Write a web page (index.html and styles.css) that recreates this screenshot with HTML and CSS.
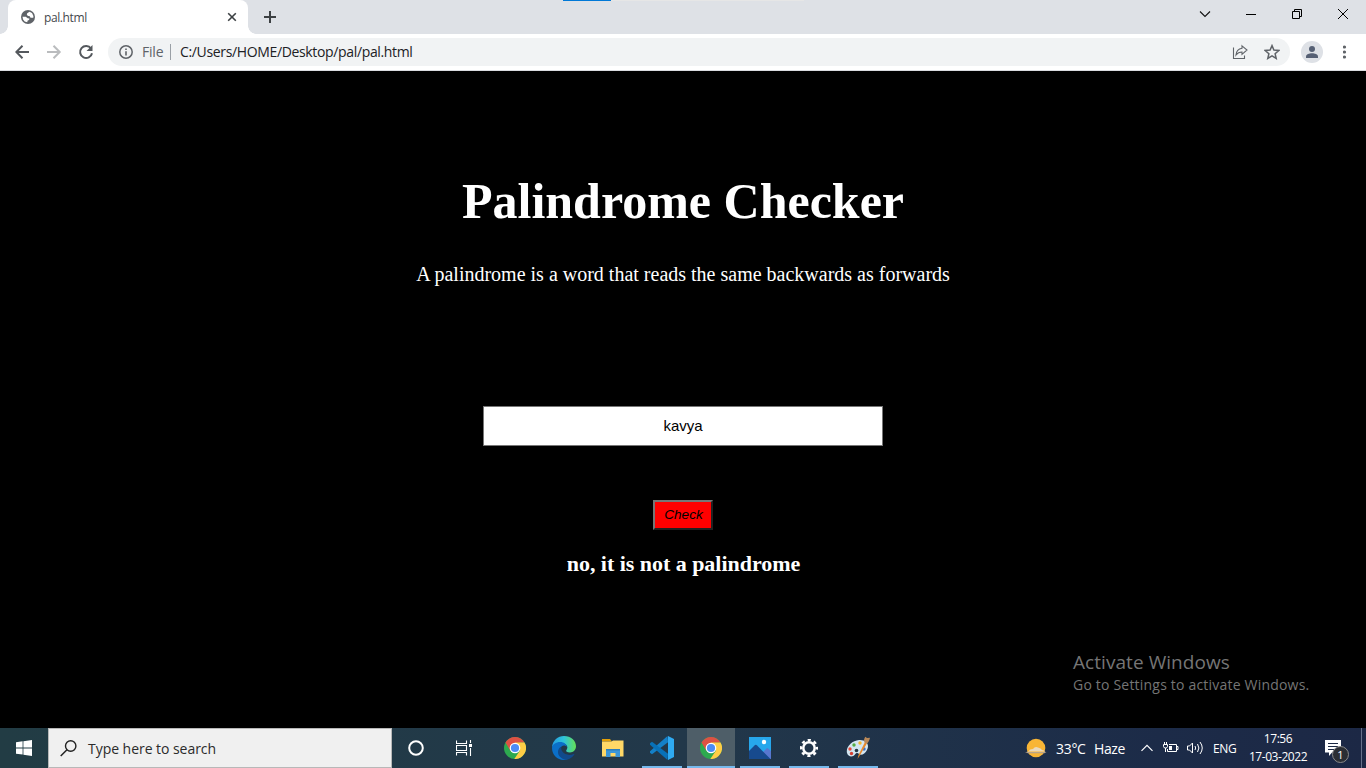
FILE: index.html
```
<!DOCTYPE html>
<html lang="en">
<head>
<meta charset="utf-8">
<title>pal.html</title>
<link rel="stylesheet" href="styles.css">
</head>
<body>
<svg class="defs" width="0" height="0" aria-hidden="true">
  <symbol id="chrome" viewBox="0 0 22 22">
    <circle cx="11" cy="11" r="11" fill="#2da94f"/>
    <path d="M11 11 1.5 5.5A11 11 0 0 1 20.5 5.5L11 6z" fill="#dd5144"/>
    <path d="M11 5.5h9.5A11 11 0 0 1 10.3 22L16 13.5z" fill="#ffcd46"/>
    <path d="M1.5 5.5 6.5 14 11 6z" fill="#dd5144"/>
    <circle cx="11" cy="11" r="5.3" fill="#fff"/>
    <circle cx="11" cy="11" r="4.1" fill="#4c8bf5"/>
  </symbol>
</svg>

<header class="tabs">
  <div class="tab">
    <svg class="globe" width="14" height="14" viewBox="0 0 14 14"><circle cx="7" cy="7" r="7" fill="#5f6368"/><path d="M8.500 1.700 6.200 3.200 5.800 5l1.500 1.100 1.500.2.700 1.400h2.800L12.400 6 11 3zM1.500 6.800h3.300l1.900 1.400 1.700.4-.3 1.500-1.400.5-.5 1.700-2.500-.8-1.600-2z" fill="#fff"/></svg>
    <span class="tab-title">pal.html</span>
    <svg class="tab-close" width="10" height="10" viewBox="0 0 10 10"><path d="m1.2 1.2 7.6 7.6m0-7.6L1.2 8.8" stroke="#3c4043" stroke-width="1.6"/></svg>
  </div>
  <svg class="newtab" width="12" height="12" viewBox="0 0 12 12"><path d="M6 0v12M0 6h12" stroke="#3c4043" stroke-width="2"/></svg>
  <div class="progress"><div class="progress-value"></div></div>
  <div class="window-controls">
    <svg width="46" height="28" viewBox="0 0 46 28"><path d="m18 11.500 5 5 5-5" fill="none" stroke="#111" stroke-width="1.100"/></svg>
    <svg width="46" height="28" viewBox="0 0 46 28"><path d="M18 14.500h10" stroke="#000"/></svg>
    <svg width="46" height="28" viewBox="0 0 46 28"><path d="M18.500 11.500h7v7h-7zM20.500 11.500v-2h7v7h-2" fill="none" stroke="#000"/></svg>
    <svg width="46" height="28" viewBox="0 0 46 28"><path d="m18 9 10 10m0-10L18 19" stroke="#000"/></svg>
  </div>
</header>

<nav class="toolbar">
  <svg width="32" height="24" viewBox="0 0 32 24"><path d="M14 12H1.500m6-6.200L1.300 12l6.200 6.200" fill="none" stroke="#54585d" stroke-width="2"/></svg>
  <svg width="32" height="24" viewBox="0 0 32 24"><path d="M0 12h12.500m-6-6.200L12.700 12l-6.200 6.200" fill="none" stroke="#babcbe" stroke-width="2"/></svg>
  <svg class="reload" width="16" height="16" viewBox="0 0 16 16"><path d="M13 4.500A6 6 0 1 0 14 9.200" fill="none" stroke="#54585d" stroke-width="2"/><path d="M14.500 1v6h-6z" fill="#54585d"/></svg>
  <div class="address">
    <svg width="14" height="14" viewBox="0 0 14 14"><circle cx="7" cy="7" r="6.200" fill="none" stroke="#5f6368" stroke-width="1.500"/><path d="M7 6.200v4.300M7 3.400v1.600" stroke="#5f6368" stroke-width="1.600"/></svg>
    <span class="scheme">File</span>
    <span class="path">C:/Users/HOME/Desktop/pal/pal.html</span>
    <svg class="share" width="16" height="16" viewBox="0 0 16 16"><path d="M1.500 3.500v11h11v-3" fill="none" stroke="#5f6368" stroke-width="1.100"/><path d="M10 1.800 15 6l-5 4.300V8C7.300 8 5.700 8.700 4 11c.3-3.700 2.400-6.200 6-6.700z" fill="none" stroke="#5f6368" stroke-width="1.100"/></svg>
    <svg class="star" width="16" height="16" viewBox="0 0 16 16"><path d="m8 1.600 1.900 4.500 4.900.4-3.700 3.200 1.100 4.700L8 11.900l-4.200 2.500 1.100-4.700L1.200 6.500l4.900-.4z" fill="none" stroke="#5f6368" stroke-width="1.500"/></svg>
  </div>
  <svg class="profile" width="22" height="22" viewBox="0 0 22 22"><circle cx="11" cy="11" r="11" fill="#dee1e6"/><circle cx="11" cy="8" r="3" fill="#566074"/><path d="M5 17v-1.500c0-2 3.300-3.200 6-3.200s6 1.200 6 3.200V17z" fill="#566074"/></svg>
  <svg class="menu" width="4" height="14" viewBox="0 0 4 14" fill="#5f6368"><circle cx="1.500" cy="2" r="1.600"/><circle cx="1.500" cy="7" r="1.600"/><circle cx="1.500" cy="12" r="1.600"/></svg>
</nav>

<main class="page">
  <h1 class="heading">Palindrome Checker</h1>
  <p class="intro">A palindrome is a word that reads the same backwards as forwards</p>
  <input class="word" type="text" value="kavya">
  <button class="check" type="button">Check</button>
  <h2 class="result">no, it is not a palindrome</h2>
  <aside class="activate">
    <div class="activate-title">Activate Windows</div>
    <div class="activate-text">Go to Settings to activate Windows.</div>
  </aside>
</main>

<footer class="taskbar">
  <div class="start"><svg width="16" height="16" viewBox="0 0 16 16" fill="#fff"><path d="M0 2.200 6.600 1.300v6.200H0zM7.400 1.200 16 0v7.500H7.400zM0 8.400h6.600v6.200L0 13.800zM7.400 8.400H16V16l-8.600-1.200z"/></svg></div>
  <div class="search">
    <svg width="17" height="17" viewBox="0 0 17 17"><circle cx="10.700" cy="6" r="5.200" fill="none" stroke="#222" stroke-width="1.400"/><path d="M7 9.700.7 16" stroke="#222" stroke-width="1.500"/></svg>
    <span class="search-text">Type here to search</span>
  </div>
  <div class="apps">
    <div class="app cortana"><svg width="16" height="16" viewBox="0 0 16 16"><circle cx="8" cy="8" r="6.800" fill="none" stroke="#fff" stroke-width="2"/></svg></div>
    <div class="app taskview"><svg width="16" height="16" viewBox="0 0 16 16"><path d="M.5.500v3h10v-3M.5 15.500v-3h10v3M.5 5.500h10v5H.5zM14.500 0v3M14.500 8v8" fill="none" stroke="#fff" stroke-width="1.100"/><path d="M13 4h3v3h-3z" fill="#fff"/></svg></div>
    <div class="app"><svg width="22" height="22"><use href="#chrome"/></svg></div>
    <div class="app"><svg width="24" height="24" viewBox="0 0 24 24">
      <defs><linearGradient id="edgeTop" x1="0" x2="1"><stop stop-color="#249be2"/><stop offset=".5" stop-color="#2fc4d9"/><stop offset="1" stop-color="#65df55"/></linearGradient></defs>
      <path d="M0 11C.7 4.500 5.800 0 12 0c7 0 12 4.700 12 10.300 0 3.700-2.700 6.200-6 6.200-3 0-4.400-1.300-3.700-2.300 2.600-3.100.3-6.600-4-6.600C5.500 7.600 2 9 0 11z" fill="url(#edgeTop)"/>
      <path d="M0 12C.2 8.500 4 6.100 8.200 6.100c3.800 0 6.500 2.200 6.700 5-1-1.600-3.500-2-5.300-.7-3.500 2.700-1.400 8.400 3.200 10.300 2.100.9 4.300 1 6 .3-2.100 2-4.700 3-7 3C5.200 24 0 18.800 0 12z" fill="#0b6fc8"/>
      <path d="M9.600 10.400C5.500 12 4.700 17.500 8.200 21c1.600 1.600 3.800 2.800 5.800 2.800 3.600-.4 6.500-2.300 8.300-5.300.3-.5-.1-.8-.6-.6-4 1.900-9 1-11.300-2.300-1.300-1.900-1.500-3.900-.8-5.200z" fill="#114a8b"/></svg></div>
    <div class="app"><svg width="22" height="18" viewBox="0 0 22 18"><path d="M0 0h8l2 2.500H0z" fill="#e3a008"/><path d="M0 2.500h9.500L11 1.500h10.500v16H0z" fill="#ffd867"/><path d="M4 18v-8h14v8h-4.500v-4h-5v4z" fill="#3c96d8"/><path d="M4 10h14v1.500H4z" fill="#2d7fbb"/></svg></div>
    <div class="app open"><svg width="24" height="24" viewBox="0 0 24 24"><path d="M17.500 0 0 15.300v1.500L2 18.200 18 6.300z" fill="#1480c8"/><path d="M17.500 24 0 8.700V7.200l2-1.400 16 11.900z" fill="#0871b8"/><path d="m18 0 6 3v18l-6 3z" fill="#2faaf2"/></svg></div>
    <div class="app open active"><svg width="22" height="22"><use href="#chrome"/></svg></div>
    <div class="app open"><svg width="22" height="22" viewBox="0 0 22 22"><path d="M0 0h22v22H0z" fill="#27a7ec"/><path d="m11 18 6.500-6.500q.8-.8 1.600 0L22 14v8H9z" fill="#5877cf"/><path d="m0 14 5.500-5.500q1.300-1.300 2.600 0L21.500 22H0z" fill="#174a8e"/><circle cx="15" cy="5" r="2.200" fill="#fff"/></svg></div>
    <div class="app open"><svg width="18" height="18" viewBox="0 0 18 18"><circle cx="9" cy="9" r="8" fill="none" stroke="#fff" stroke-width="2.400" stroke-dasharray="3.140 3.143" stroke-dashoffset="1.570"/><circle cx="9" cy="9" r="5.700" fill="none" stroke="#fff" stroke-width="2.500"/></svg></div>
    <div class="app open"><svg width="24" height="24" viewBox="0 0 24 24"><path d="M1 17C-.5 11 6 4.500 13 4c7-.5 11 4.500 8 10-2 4-6 6-8 4-1.500-1.500-3-1-4 .5-2 3-7 2.500-8-1.500z" fill="#d3e6f1"/><circle cx="4" cy="13" r="1.700" fill="#e84b3c"/><circle cx="8" cy="9" r="1.700" fill="#55ad43"/><circle cx="14" cy="7" r="1.700" fill="#f3b52e"/><circle cx="5.500" cy="17.500" r="1.700" fill="#d63f32"/><circle cx="18" cy="13" r="1.700" fill="#3c70c6"/><circle cx="10.500" cy="14.500" r="1.800" fill="#253742"/><path d="m11.500 23 1-4L19 6l2 1.200L13.500 20z" fill="#e68a2e"/><path d="M18.500 6.500c-.8-2-.5-4 .8-5.800L21 2l3-.2c-.5 2.500-1.500 4.500-3 5.700z" fill="#b98858"/></svg></div>
  </div>
  <div class="tray">
    <svg width="24" height="20" viewBox="0 0 24 20"><circle cx="11" cy="10" r="9.300" fill="#f8b536"/><path d="M4 13q.5-2 4-2 2-3 5-1.500 3 .5 4 2.500 2 0 3.500 1.500H1.500Q2 13 4 13z" fill="#ead9bd"/><path d="M0 14h21.500l-2 1.300H3z" fill="#b9a488"/></svg>
    <span class="temp">33°C</span><span class="haze">Haze</span>
    <svg class="chevron" width="12" height="8" viewBox="0 0 12 8"><path d="m.5 6.800 5.500-5.500 5.500 5.500" fill="none" stroke="#fff" stroke-width="1.200"/></svg>
    <svg class="battery" width="16" height="12" viewBox="0 0 16 12"><path d="M6 2.500h7.500v7H4.500V7M13.500 4.500h1.500v3h-1.500" fill="none" stroke="#fff"/><path d="M6 4h3v4H6z" fill="#fff"/><path d="M.5 2.500h4v2q0 1.500-2 1.500t-2-1.500zM1.500 0v2.500M3.500 0v2.500M2.500 6v4" fill="none" stroke="#fff"/></svg>
    <svg class="volume" width="17" height="14" viewBox="0 0 17 14"><path d="M.5 5h2l3-3v10l-3-3h-2zM8 5q1.300 2 0 4M10.500 3q2.800 4 0 8M13 1q4.500 6 0 12" fill="none" stroke="#fff"/></svg>
    <span class="lang">ENG</span>
    <div class="clock"><span>17:56</span><span>17-03-2022</span></div>
    <div class="notices"><svg width="16" height="16" viewBox="0 0 16 16"><path d="M0 0h16v12.500H7L4 16v-3.500H0z" fill="#fff"/><path d="M3 3.500h10M3 6.500h10M3 9.500h7" stroke="#1d2a44"/></svg><span class="badge">1</span></div>
    <div class="peek"></div>
  </div>
</footer>
</body>
</html>
```
FILE: styles.css
```
* { box-sizing: border-box; }
body { margin: 0; width: 1366px; height: 768px; overflow: hidden; display: flex; flex-direction: column; font-family: "Open Sans", "Noto Sans", sans-serif; background: #000; }
svg { display: block; flex: none; }
span { white-space: nowrap; }
.defs { position: absolute; }

.tabs { height: 34px; flex: none; display: flex; background: #dee1e6; padding-left: 8px; position: relative; }
.tab { position: relative; width: 240px; background: #fff; border-radius: 8px 8px 0 0; display: flex; align-items: center; padding-left: 13px; }
.tab::before, .tab::after { content: ""; position: absolute; bottom: 0; width: 8px; height: 8px; }
.tab::before { left: -8px; background: radial-gradient(circle at 0 0, transparent 7.5px, #fff 8px); }
.tab::after { right: -8px; background: radial-gradient(circle at 100% 0, transparent 7.5px, #fff 8px); }
.tab-title { margin-left: 9px; width: 139px; font-size: 12px; letter-spacing: -.4px; color: #45494d; }
.tab-close { margin-left: 44px; }
.newtab { margin: 11px 0 0 16px; }
.progress { position: absolute; left: 563px; top: 0; width: 241px; height: 1px; background: #e6e6e6; }
.progress-value { width: 48px; height: 1px; background: #0078d7; }
.window-controls { display: flex; margin-left: auto; }

.toolbar { height: 37px; flex: none; display: flex; align-items: center; background: #fff; border-bottom: 1px solid #dadce0; padding-left: 15px; }
.reload { margin-left: -1px; }
.address { margin-left: 14px; width: 1182px; height: 28px; border-radius: 14px; background: #f1f3f4; display: flex; align-items: center; padding-left: 11px; font-size: 14px; }
.scheme { margin-left: 9px; padding-right: 8px; border-right: 1px solid #9aa0a6; line-height: 16px; width: 29px; color: #5f6368; letter-spacing: -.2px; }
.path { margin-left: 9px; color: #202124; letter-spacing: -.35px; line-height: 16px; padding-bottom: 1px; }
.share { margin-left: auto; }
.star { margin: 0 10px 0 16px; }
.profile { margin-left: 11px; }
.menu { margin-left: 20px; }

.page { position: relative; flex: 1; display: flex; flex-direction: column; align-items: center; background: #000; color: #fff; font-family: "Liberation Serif", "Times New Roman", serif; }
.heading { margin: 101px 0 0; font-size: 50px; line-height: 58px; }
.intro { margin: 32px 0 0; font-size: 20px; line-height: 24px; }
.word { margin-top: 120px; width: 400px; height: 40px; border: 1px solid #767676; border-radius: 0; padding: 0 2px 2px; background: #fff; color: #000; text-align: center; font: 15px "Liberation Sans", Arial, sans-serif; }
.check { margin-top: 54px; width: 60px; height: 30px; padding: 0 0 1px 1px; border: 2px solid; border-color: #767676 #212121 #212121 #767676; background: red; color: #000; font: italic 13.6px "Liberation Sans", Arial, sans-serif; }
.result { margin: 21px 0 0; font-size: 22px; line-height: 26px; letter-spacing: -.03px; padding-left: 1px; }
.activate { position: absolute; left: 1073px; top: 578px; color: #757575; font-family: "Open Sans", sans-serif; white-space: nowrap; }
.activate-title { font-size: 19px; line-height: 27px; letter-spacing: .06px; }
.activate-text { font-size: 14px; line-height: 18px; letter-spacing: .2px; }

.taskbar { height: 40px; flex: none; display: flex; background: linear-gradient(90deg, #223c44, #22384a 50%, #1c2b48 85%, #1c2845); color: #fff; }
.start { width: 48px; display: flex; align-items: center; justify-content: center; }
.search { width: 344px; background: #f0f0f0; border: 1px solid #b8b8b8; display: flex; align-items: center; padding-left: 11px; }
.search-text { margin-left: 11px; font-size: 14px; letter-spacing: -.04px; color: #2b2b2b; }
.apps { display: flex; padding-left: 1px; }
.app { width: 48px; margin-right: 1px; height: 40px; display: flex; align-items: center; justify-content: center; position: relative; }
.app.cortana { padding-right: 2px; }
.app.taskview { padding-right: 4px; }
.app.open::after { content: ""; position: absolute; left: 4px; right: 4px; bottom: 0; height: 2px; background: #76b9ed; }
.app.open:not(.active) { padding-right: 1px; }
.app.active { background: #4e5e68; }
.app.active::after { left: 0; right: 0; }
.tray { flex: 1; display: flex; align-items: center; font-size: 14px; padding-left: 142px; }
.temp { width: 30px; margin-left: 7px; letter-spacing: -.3px; }
.haze { width: 32px; margin-left: 8px; letter-spacing: -.4px; }
.chevron { margin-left: 15px; }
.battery { margin-left: 10px; }
.volume { margin-left: 8px; }
.lang { width: 24px; margin-left: 9px; font-size: 12px; letter-spacing: -.3px; }
.clock { width: 62px; margin-left: 10px; font-size: 12px; line-height: 18px; letter-spacing: -.45px; display: flex; flex-direction: column; align-items: center; padding-bottom: 1px; }
.notices { position: relative; margin-left: 16px; }
.badge { position: absolute; left: 7px; top: 6px; width: 17px; height: 17px; border: 1px solid #8a8a8a; border-radius: 50%; background: #2b2e34; font-size: 11px; line-height: 15px; text-align: center; }
.peek { margin-left: auto; width: 5px; height: 40px; border-left: 1px solid #66718a; }
```
